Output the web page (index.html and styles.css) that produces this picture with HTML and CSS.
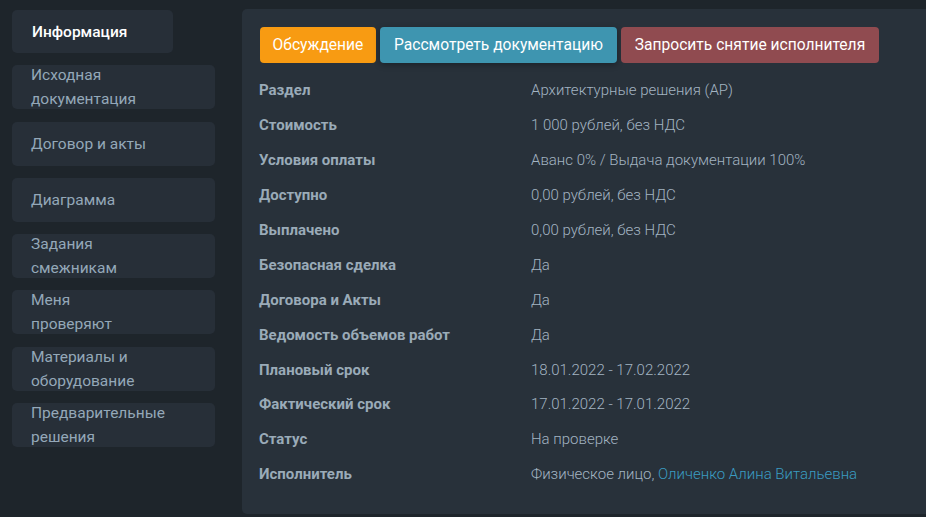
FILE: index.html
```html
<!DOCTYPE html>
<html lang="ru">
<head>
<meta charset="utf-8">
<link rel="stylesheet" href="styles.css">
</head>
<body>
<div class="page">
  <nav class="sidebar">
    <a class="nav-item active">Информация</a>
    <a class="nav-item">Исходная<br>документация</a>
    <a class="nav-item single">Договор и акты</a>
    <a class="nav-item single">Диаграмма</a>
    <a class="nav-item">Задания<br>смежникам</a>
    <a class="nav-item">Меня<br>проверяют</a>
    <a class="nav-item">Материалы и<br>оборудование</a>
    <a class="nav-item">Предварительные<br>решения</a>
  </nav>
  <main class="panel">
    <div class="actions">
      <button class="btn btn-orange">Обсуждение</button>
      <button class="btn btn-teal">Рассмотреть документацию</button>
      <button class="btn btn-red">Запросить снятие исполнителя</button>
    </div>
    <dl class="info">
      <div class="row"><dt>Раздел</dt><dd>Архитектурные решения (АР)</dd></div>
      <div class="row"><dt>Стоимость</dt><dd>1 000 рублей, без НДС</dd></div>
      <div class="row"><dt>Условия оплаты</dt><dd>Аванс 0% / Выдача документации 100%</dd></div>
      <div class="row"><dt>Доступно</dt><dd>0,00 рублей, без НДС</dd></div>
      <div class="row"><dt>Выплачено</dt><dd>0,00 рублей, без НДС</dd></div>
      <div class="row"><dt>Безопасная сделка</dt><dd>Да</dd></div>
      <div class="row"><dt>Договора и Акты</dt><dd>Да</dd></div>
      <div class="row"><dt>Ведомость объемов работ</dt><dd>Да</dd></div>
      <div class="row"><dt>Плановый срок</dt><dd>18.01.2022 - 17.02.2022</dd></div>
      <div class="row"><dt>Фактический срок</dt><dd>17.01.2022 - 17.01.2022</dd></div>
      <div class="row"><dt>Статус</dt><dd>На проверке</dd></div>
      <div class="row"><dt>Исполнитель</dt><dd>Физическое лицо, <a class="link">Оличенко Алина Витальевна</a></dd></div>
    </dl>
  </main>
</div>
</body>
</html>
```

FILE: styles.css
```css
* { box-sizing: border-box; }
html, body {
  margin: 0;
  padding: 0;
  background: #1e252b;
  font-family: Roboto, "Liberation Sans", sans-serif;
  overflow: hidden;
}
.page {
  display: flex;
  align-items: flex-start;
  padding: 9px 0 0 12px;
  gap: 27px;
  height: 517px;
}
.sidebar {
  width: 203px;
  display: flex;
  flex-direction: column;
  gap: 12.3px;
  padding-top: 1px;
  flex-shrink: 0;
}
.nav-item {
  display: flex;
  align-items: center;
  height: 44px;
  background: #272f38;
  border-radius: 5px;
  padding-left: 19px;
  color: #94a8b8;
  font-size: 15.5px;
  line-height: 24px;
}
.nav-item.active {
  width: 161px;
  height: 43px;
  color: #ffffff;
  font-weight: 500;
  padding-left: 20px;
}
.panel {
  flex: 1;
  background: #28313a;
  border-radius: 5px 0 0 5px;
  height: 505px;
  padding: 18px 0 0 18px;
}
.actions {
  display: flex;
  gap: 4px;
}
.btn {
  height: 36px;
  border: none;
  border-radius: 4px;
  padding: 0;
  font-family: inherit;
  font-size: 15.6px;
  color: #ffffff;
}
.btn-orange { background: #f89b12; width: 116px; }
.btn-teal { background: #3e95b0; width: 237px; box-shadow: 0 2px 6px rgba(0,0,0,0.3); }
.btn-red { background: #904b50; width: 258px; }
.info {
  margin: 10px 0 0 -1px;
}
.row {
  display: flex;
  height: 34.9px;
  align-items: center;
}
.row dt {
  width: 272px;
  font-weight: 700;
  font-size: 15px;
  color: #9aabb8;
}
.row dd {
  margin: 0;
  font-size: 15px;
  font-weight: 300;
  color: #a3b4c2;
}
.link { color: #3a9cc2; }
```
